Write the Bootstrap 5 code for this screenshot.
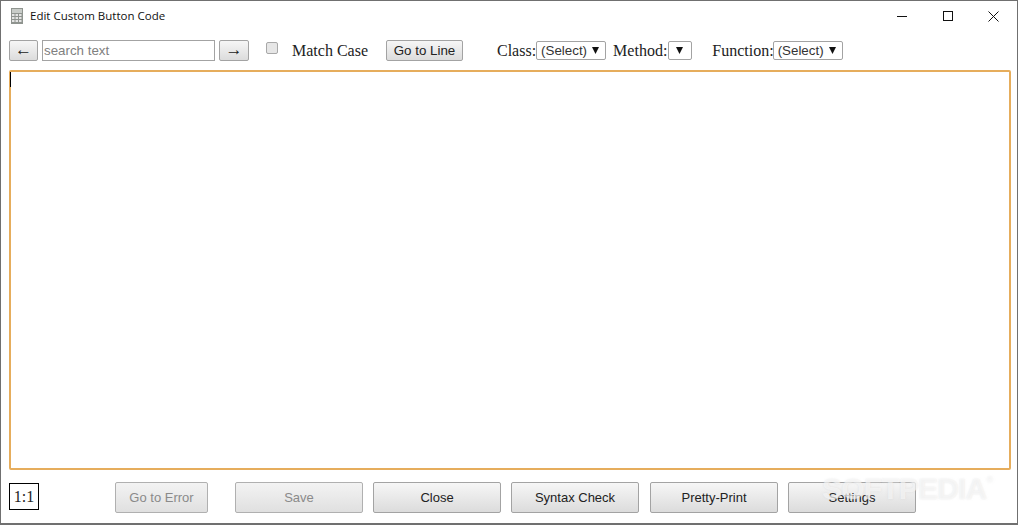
<!DOCTYPE html>
<html lang="en">
<head>
<meta charset="utf-8">
<title>Edit Custom Button Code</title>
<link href="https://cdn.jsdelivr.net/npm/bootstrap@5.3.0/dist/css/bootstrap.min.css" rel="stylesheet">
<style>
html,body{height:100%;margin:0;background:#fff}
.app-win{width:1018px;height:525px;border:1px solid #707070;border-bottom-width:2px;position:relative;overflow:hidden;background:#fff}
.title-row{height:30px;padding-left:9px}
.title-text{font:11.5px/1 "Open Sans","Noto Sans",sans-serif;color:#111;margin-left:6px}
.win-btns{width:138px}
.win-btn{width:46px;height:30px}
.win-btn-x{width:44px;margin-right:2px}
.tool-row{height:21px;margin-top:9px;padding-left:8px}
.ser{font:16px/21px "Liberation Serif",serif;color:#222}
.gbtn{font:13px/1 "Liberation Sans",sans-serif;color:#222;background:linear-gradient(#f6f6f6,#dcdcdc);border:1px solid #a3a3a3;border-radius:2px;padding:0;text-align:center}
.gbtn:disabled{color:#8a8a8a;opacity:1;background:linear-gradient(#f3f3f3,#e0e0e0);border-color:#b0b0b0}
.arrow-btn{width:29px;height:21px;font-size:17px;padding-bottom:2px}
.arrow-btn2{width:30px}
.search-in{width:173px;height:21px;margin:0 4px;border:1px solid #a3a3a3;font:13.33px "Liberation Sans",sans-serif;padding:0 1px;color:#222;outline:0}
.search-in::placeholder{color:#808080;opacity:1}
.fake-check{width:12px;height:12px;margin:0 14px 0 17px;position:relative;top:-3px;appearance:none;background:#e6e6e6;border:1px solid #a8a8a8;border-radius:2px}
.line-btn{width:77px;height:21px;margin-left:18px;margin-right:34px;font-size:13.33px}
.sel{appearance:none;height:19px;border:1px solid #a3a3a3;border-radius:2px;background:#fff url("data:image/svg+xml,%3Csvg xmlns='http://www.w3.org/2000/svg' width='7' height='7'%3E%3Cpath d='M0 0h7L3.500 7z' fill='%23111'/%3E%3C/svg%3E") no-repeat right 6px top 5px;font:13.33px/17px "Liberation Sans",sans-serif;color:#333;padding:0 0 0 4px;margin:0}
.sel-w{width:70px}
.sel-n{width:24px;margin-left:1px;background-position:right 8px top 5px}
.sel-fn{margin-left:-1px}
.gap-a{margin-left:7px}
.gap-b{margin-left:20px}
.editor{height:400px;margin:9px 6px 0 8px;border:2px solid #e6ad5c;border-radius:2px;background:#fff;padding:0}
.caret-bar{width:1px;height:15px;margin-left:-1px;background:#000}
.foot-row{height:31px;margin-top:12px;padding-left:8px}
.ratio{width:30px;height:27px;margin-top:1px;margin-right:76px;border:1px solid #000;font:16px/25px "Liberation Serif",serif;color:#222;text-align:center}
.act{width:128px;height:31px;margin-right:10px}
.act-err{width:93px;margin-right:27px}
.act-r{margin-left:1px}
.mark-soft{position:absolute;left:821px;top:473px;font:700 30px/1 "Liberation Sans",sans-serif;letter-spacing:-.8px;color:rgba(255,255,255,.55);text-shadow:0 0 2px rgba(205,205,205,.5);pointer-events:none;white-space:nowrap}
.mark-soft sup{font-size:9px;font-weight:400;top:-16px;letter-spacing:0}
</style>
</head>
<body>
<div class="app-win d-flex flex-column">
  <div class="title-row d-flex align-items-center">
    <svg width="14" height="16" viewBox="0 0 14 16" aria-hidden="true"><rect x="1" y="0" width="12" height="16" fill="#8f948f"/><rect x="2" y="1" width="10" height="4" fill="#c8ccc8"/><g fill="#e4e4e4"><rect x="2" y="6" width="2.500" height="2"/><rect x="5.500" y="6" width="2.500" height="2"/><rect x="9" y="6" width="2.500" height="2"/><rect x="2" y="9" width="2.500" height="2"/><rect x="5.500" y="9" width="2.500" height="2"/><rect x="9" y="9" width="2.500" height="2"/><rect x="2" y="12" width="2.500" height="2"/><rect x="5.500" y="12" width="2.500" height="2"/><rect x="9" y="12" width="2.500" height="2"/></g></svg>
    <span class="title-text flex-grow-1">Edit Custom Button Code</span>
    <div class="win-btns d-flex">
      <div class="win-btn d-flex align-items-center justify-content-center"><svg width="11" height="11" viewBox="0 0 11 11"><path d="M0 5.500h10" stroke="#111" fill="none"/></svg></div>
      <div class="win-btn d-flex align-items-center justify-content-center"><svg width="11" height="11" viewBox="0 0 11 11"><rect x=".5" y=".5" width="9" height="9" stroke="#111" fill="none"/></svg></div>
      <div class="win-btn win-btn-x d-flex align-items-center justify-content-center"><svg width="11" height="11" viewBox="0 0 11 11"><path d="M.5.5l10 10M10.500.5l-10 10" stroke="#111" fill="none"/></svg></div>
    </div>
  </div>
  <div class="tool-row d-flex align-items-center">
    <button class="gbtn arrow-btn" type="button">←</button>
    <input class="search-in" type="text" placeholder="search text">
    <button class="gbtn arrow-btn arrow-btn2" type="button">→</button>
    <input class="fake-check" type="checkbox">
    <span class="ser">Match Case</span>
    <button class="gbtn line-btn" type="button">Go to Line</button>
    <span class="ser">Class:</span>
    <select class="sel sel-w"><option>(Select)</option></select>
    <span class="ser gap-a">Method:</span>
    <select class="sel sel-n"><option></option></select>
    <span class="ser gap-b">Function:</span>
    <select class="sel sel-w sel-fn"><option>(Select)</option></select>
  </div>
  <div class="editor"><div class="caret-bar"></div></div>
  <div class="foot-row d-flex align-items-start">
    <div class="ratio">1:1</div>
    <button class="gbtn act act-err" type="button" disabled>Go to Error</button>
    <button class="gbtn act" type="button" disabled>Save</button>
    <button class="gbtn act" type="button">Close</button>
    <button class="gbtn act" type="button">Syntax Check</button>
    <button class="gbtn act act-r" type="button">Pretty-Print</button>
    <button class="gbtn act" type="button">Settings</button>
  </div>
  <div class="mark-soft">SOFTPEDIA<sup>®</sup></div>
</div>
<script src="https://cdn.jsdelivr.net/npm/bootstrap@5.3.0/dist/js/bootstrap.bundle.min.js"></script>
</body>
</html>
